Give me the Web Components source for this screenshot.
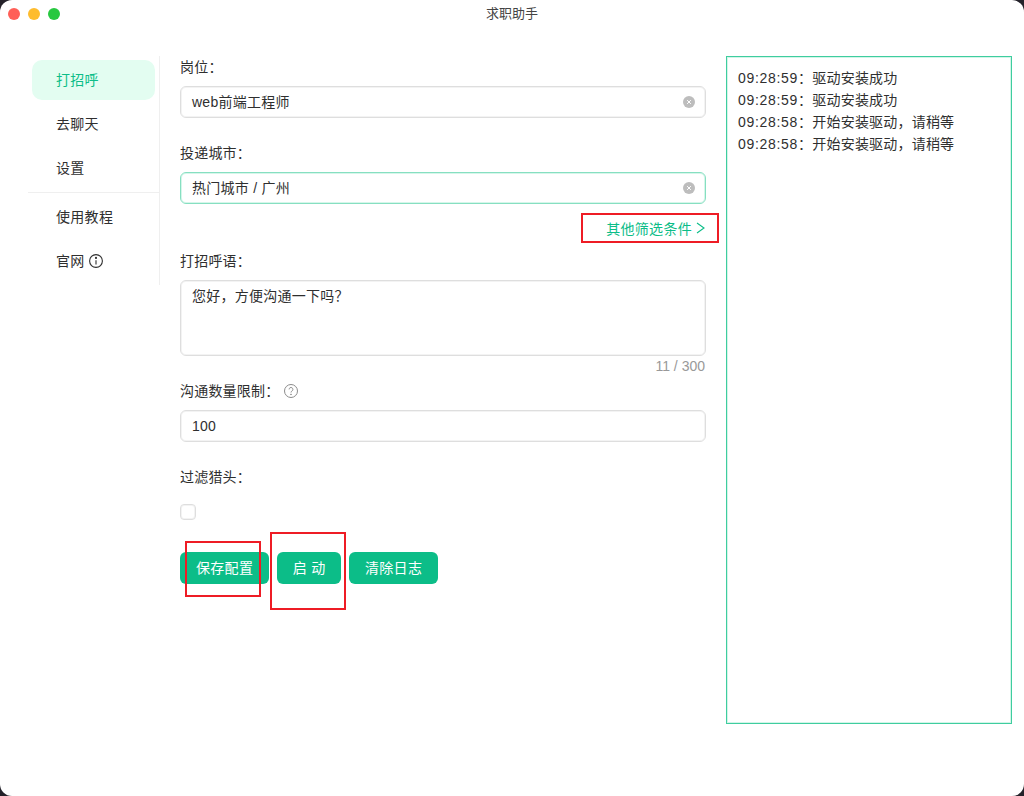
<!DOCTYPE html>
<html lang="zh-CN">
<head>
<meta charset="utf-8">
<title>求职助手</title>
<style>
  html, body { margin: 0; height: 100%; background: #24222a; }
  body { font-family: "Liberation Sans", "Noto Sans CJK SC", sans-serif; color: #2f2f2f; }
</style>
</head>
<body>
<job-app>
  <nav-item active>打招呼</nav-item>
  <nav-item>去聊天</nav-item>
  <nav-item>设置</nav-item>
  <nav-item>使用教程</nav-item>
  <nav-item info>官网</nav-item>
</job-app>

<script>
const FONT = '"Liberation Sans", "Noto Sans CJK SC", sans-serif';
const GREEN = '#0cbd88';

class NavItem extends HTMLElement {
  constructor() {
    super();
    const info = this.hasAttribute('info') ? `
      <svg width="16" height="16" viewBox="0 0 16 16" fill="none" stroke="#2f2f2f" stroke-width="1.1">
        <circle cx="8" cy="8" r="6.4"/>
        <path d="M8 7.2v4.2"/>
        <circle cx="8" cy="4.9" r=".5" fill="#2f2f2f"/>
      </svg>` : '';
    this.attachShadow({ mode: 'open' }).innerHTML = `
      <style>
        :host {
          display: flex; align-items: center; gap: 3px;
          box-sizing: border-box; height: 40px;
          margin: 4px 4px 0; padding-left: 24px;
          border-radius: 10px;
          font-size: 14px; letter-spacing: .3px; color: #2f2f2f;
        }
        :host([active]) { background: #e3fdf1; color: ${GREEN}; }
        span { padding-bottom: 2px; }
      </style>
      <span><slot></slot></span>${info}`;
  }
}
customElements.define('nav-item', NavItem);

class FormField extends HTMLElement {
  constructor() {
    super();
    this.attachShadow({ mode: 'open' }).innerHTML = `
      <style>
        :host { display: block; }
        .label {
          display: flex; align-items: center; gap: 4px;
          height: 22px; margin-bottom: 8px;
          font-size: 14px; letter-spacing: .2px; color: #2f2f2f;
        }
        span { padding-bottom: 2px; }
      </style>
      <div class="label"><span>${this.getAttribute('label')}</span><slot name="hint"></slot></div>
      <slot></slot>`;
  }
}
customElements.define('form-field', FormField);

class TextBox extends HTMLElement {
  constructor() {
    super();
    const clear = this.hasAttribute('clearable') ? `
      <svg class="clear" width="12" height="12" viewBox="0 0 12 12">
        <circle cx="6" cy="6" r="6" fill="#bdbdbd"/>
        <path d="M4.1 4.1l3.8 3.8M7.9 4.1L4.1 7.9" stroke="#fff" stroke-width="1"/>
      </svg>` : '';
    this.attachShadow({ mode: 'open' }).innerHTML = `
      <style>
        :host {
          display: flex; align-items: center; justify-content: space-between;
          box-sizing: border-box; height: 32px; padding: 0 10px 0 11px;
          background: #fff; border: 1px solid #dedede; border-radius: 6px;
          box-shadow: inset 0 0 0 1px #f3f3f3;
          font-size: 14px; letter-spacing: .25px; color: #2f2f2f;
        }
        :host([focused]) { border-color: #86dfc1; box-shadow: inset 0 0 0 1px #d6f6ea; }
        :host([multiline]) { height: 76px; align-items: flex-start; padding-top: 4px; line-height: 22px; }
        span { padding-bottom: 2px; }
        .clear { flex: none; }
      </style>
      <span><slot></slot></span>${clear}`;
  }
}
customElements.define('text-box', TextBox);

class AppButton extends HTMLElement {
  constructor() {
    super();
    this.attachShadow({ mode: 'open' }).innerHTML = `
      <style>
        :host {
          display: inline-flex; align-items: center; justify-content: center;
          box-sizing: border-box; height: 32px; padding: 0 16px 2px;
          background: #0cbd88; border-radius: 6px;
          font-size: 14px; letter-spacing: .3px; color: #fff;
        }
      </style>
      <slot></slot>`;
  }
}
customElements.define('app-button', AppButton);

// red rectangles drawn over the screenshot by hand
class MarkBox extends HTMLElement {
  constructor() {
    super();
    this.attachShadow({ mode: 'open' }).innerHTML = `
      <style>
        :host {
          position: absolute; box-sizing: border-box;
          border: 2px solid #ee1c25; pointer-events: none;
        }
      </style>`;
  }
}
customElements.define('mark-box', MarkBox);

class LogPanel extends HTMLElement {
  constructor() {
    super();
    const lines = [
      ['09:28:59', '：驱动安装成功'],
      ['09:28:59', '：驱动安装成功'],
      ['09:28:58', '：开始安装驱动，请稍等'],
      ['09:28:58', '：开始安装驱动，请稍等']
    ];
    this.attachShadow({ mode: 'open' }).innerHTML = `
      <style>
        :host {
          display: block; box-sizing: border-box;
          width: 286px; height: 668px; padding: 10px 11px;
          border: 1px solid #3fcd9f;
          box-shadow: inset 0 0 0 1px #d2f5e8;
          font-size: 14px; line-height: 22px; color: #2f2f2f;
        }
        div { white-space: nowrap; letter-spacing: .2px; }
        b { font-weight: 400; letter-spacing: .7px; }
      </style>
      ${lines.map(l => `<div><b>${l[0]}</b>${l[1]}</div>`).join('')}`;
  }
}
customElements.define('log-panel', LogPanel);

class JobApp extends HTMLElement {
  constructor() {
    super();
    this.attachShadow({ mode: 'open' }).innerHTML = `
      <style>
        :host {
          display: block; width: 1024px; height: 796px; overflow: hidden;
          background: #fff; border-radius: 12px;
          font-family: ${FONT};
        }
        .titlebar {
          position: relative; display: flex; align-items: center; justify-content: center;
          box-sizing: border-box; height: 28px; padding-bottom: 4px;
          font-size: 13px; color: #444;
        }
        .lights { position: absolute; left: 8px; top: 8px; display: flex; gap: 8px; }
        .lights i { width: 12px; height: 12px; border-radius: 50%; }
        .main { display: flex; align-items: flex-start; padding: 28px 12px 0 28px; }
        .sidebar {
          flex: none; box-sizing: border-box; width: 132px; height: 229px;
          border-right: 1px solid #efefef;
        }
        .divider { height: 1px; margin-top: 4px; background: #efefef; }
        .form { position: relative; flex: none; width: 526px; margin: 0 20px; }
        form-field { margin-bottom: 24px; }
        .more {
          display: flex; align-items: center; justify-content: flex-end; gap: 4px;
          height: 22px; margin: -11px 1px 11px 0;
          font-size: 14px; letter-spacing: .3px; color: ${GREEN};
        }
        .count {
          height: 20px; margin-bottom: 4px; text-align: right;
          font-size: 14px; line-height: 20px; color: #999; padding-right: 1px;
        }
        .check-row { padding: 8px 0 32px; }
        .check {
          box-sizing: border-box; width: 16px; height: 16px;
          border: 1px solid #dedede; border-radius: 4px;
          box-shadow: inset 0 0 0 1px #f3f3f3;
        }
        .actions { display: flex; gap: 8px; }
        .log { flex: none; }
      </style>
      <div class="titlebar">
        <div class="lights">
          <i style="background:#ff5f57"></i><i style="background:#febc2e"></i><i style="background:#28c840"></i>
        </div>
        求职助手
      </div>
      <div class="main">
        <div class="sidebar">
          <slot name="top"></slot>
          <div class="divider"></div>
          <slot name="bottom"></slot>
        </div>
        <div class="form">
          <form-field label="岗位："><text-box clearable>web前端工程师</text-box></form-field>
          <form-field label="投递城市："><text-box clearable focused>热门城市 / 广州</text-box></form-field>
          <div class="more"><span>其他筛选条件</span>
            <svg width="9" height="12" viewBox="0 0 9 12" fill="none" stroke="${GREEN}" stroke-width="1.1"><path d="M1 1l7 5-7 5"/></svg>
          </div>
          <form-field label="打招呼语：" style="margin-bottom:0"><text-box multiline>您好，方便沟通一下吗？</text-box></form-field>
          <div class="count">11 / 300</div>
          <form-field label="沟通数量限制：">
            <svg slot="hint" width="16" height="16" viewBox="0 0 16 16" fill="none" stroke="#8c8c8c" stroke-width="1">
              <circle cx="8" cy="8" r="6.5"/>
              <path d="M6.1 6.4a1.9 1.9 0 1 1 2.9 1.6c-.7.4-1 .8-1 1.5"/>
              <circle cx="8" cy="11.4" r=".4" fill="#8c8c8c"/>
            </svg>
            <text-box style="padding-top:2px">100</text-box>
          </form-field>
          <form-field label="过滤猎头：" style="margin-bottom:0"><div class="check-row"><div class="check"></div></div></form-field>
          <div class="actions">
            <app-button>保存配置</app-button>
            <app-button style="padding:0 15.5px 2px">启 动</app-button>
            <app-button>清除日志</app-button>
          </div>
          <mark-box style="left:401px;top:157px;width:138px;height:30px"></mark-box>
          <mark-box style="left:5px;top:485px;width:76px;height:56px"></mark-box>
          <mark-box style="left:90px;top:476px;width:76px;height:78px"></mark-box>
        </div>
        <log-panel class="log"></log-panel>
      </div>`;

    // nav items come in through the light DOM, split around the divider
    [...this.querySelectorAll('nav-item')].forEach((item, i) => {
      item.slot = i < 3 ? 'top' : 'bottom';
    });
  }
}
customElements.define('job-app', JobApp);
</script>
</body>
</html>
